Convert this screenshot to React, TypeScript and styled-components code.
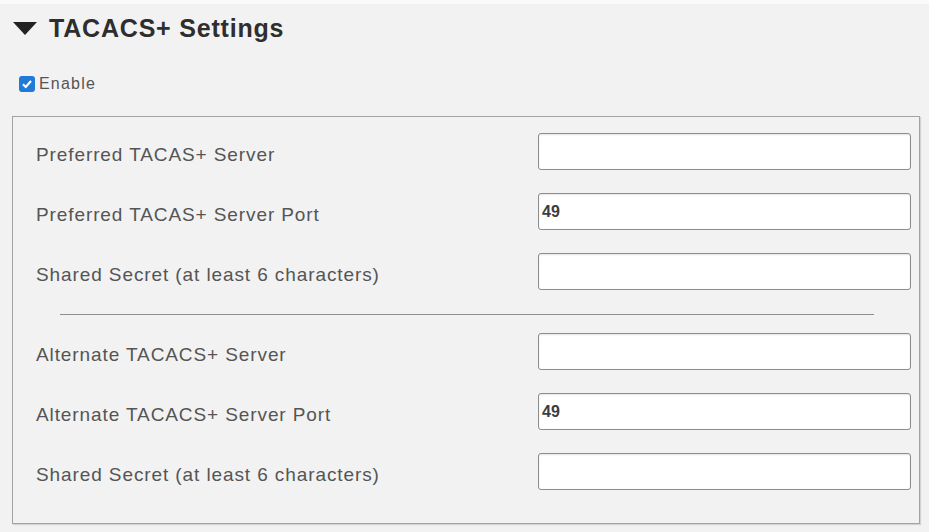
import { Fragment } from 'react';
import styled, { createGlobalStyle } from 'styled-components';

const GlobalStyle = createGlobalStyle`
  html, body {
    margin: 0;
    padding: 0;
    background-color: #f2f2f2;
  }
  * {
    box-sizing: border-box;
  }
`;

const Page = styled.div`
  width: 929px;
  height: 532px;
  padding: 14px 9px 0 12px;
  background-color: #f2f2f2;
  border-top: 4px solid #fafafa;
  font-family: 'Liberation Sans', Arial, sans-serif;
`;

const Header = styled.div`
  display: flex;
  align-items: center;
  gap: 12px;
  height: 28px;
  margin-top: -4px;
  padding-left: 1px;
`;

const Title = styled.h2`
  margin: 0;
  font-size: 25px;
  line-height: 28px;
  font-weight: 700;
  letter-spacing: 0.8px;
  color: #2e2e2e;
`;

const EnableRow = styled.label`
  display: flex;
  align-items: center;
  gap: 4px;
  height: 18px;
  margin-top: 33px;
  padding-left: 7px;
  font-size: 16px;
  letter-spacing: 1.2px;
  color: #555;
`;

const CheckBox = styled.span`
  display: flex;
  align-items: center;
  justify-content: center;
  width: 16px;
  height: 16px;
  border-radius: 3px;
  background-color: #1f7ad8;
`;

const Panel = styled.div`
  margin-top: 23px;
  height: 408px;
  padding: 16px 8px 32px 23px;
  border: 1px solid #a2a2a2;
  box-shadow: 1px 1px 1px rgba(0, 0, 0, 0.12);
`;

const Section = styled.div`
  display: grid;
  grid-template-columns: 1fr 373px;
  row-gap: 23px;
`;

const Label = styled.span`
  display: flex;
  align-items: center;
  padding-top: 6px;
  font-size: 19px;
  letter-spacing: 0.9px;
  color: #555;
`;

const Field = styled.input`
  height: 37px;
  width: 373px;
  padding: 0 3px;
  border: 1px solid #8c8c8c;
  border-radius: 3px;
  background-color: #fff;
  box-shadow: inset 0 1px 2px rgba(0, 0, 0, 0.1);
  font-family: 'Liberation Sans', Arial, sans-serif;
  font-size: 16px;
  font-weight: 700;
  color: #3d3d3d;
  outline: none;
`;

const Divider = styled.hr`
  margin: 24px 37px 18px 24px;
  border: none;
  border-top: 1px solid #8e8e8e;
  height: 0;
`;

const primary = [
  { label: 'Preferred TACAS+ Server', value: '' },
  { label: 'Preferred TACAS+ Server Port', value: '49' },
  { label: 'Shared Secret (at least 6 characters)', value: '' },
];

const alternate = [
  { label: 'Alternate TACACS+ Server', value: '' },
  { label: 'Alternate TACACS+ Server Port', value: '49' },
  { label: 'Shared Secret (at least 6 characters)', value: '' },
];

const Rows = ({ items }: { items: { label: string; value: string }[] }) => (
  <Section>
    {items.map((item, i) => (
      <Fragment key={i}>
        <Label>{item.label}</Label>
        <Field defaultValue={item.value} />
      </Fragment>
    ))}
  </Section>
);

export default function App() {
  return (
    <>
      <GlobalStyle />
      <Page>
        <Header>
          <svg width="24" height="13" viewBox="0 0 24 13">
            <path d="M0 0 H24 L12 13 Z" fill="#222" />
          </svg>
          <Title>TACACS+ Settings</Title>
        </Header>

        <EnableRow>
          <CheckBox>
            <svg width="12" height="12" viewBox="0 0 12 12">
              <path d="M2 6.3 L4.8 9 L10 3" stroke="#fff" strokeWidth="2.2" fill="none" />
            </svg>
          </CheckBox>
          Enable
        </EnableRow>

        <Panel>
          <Rows items={primary} />
          <Divider />
          <Rows items={alternate} />
        </Panel>
      </Page>
    </>
  );
}
